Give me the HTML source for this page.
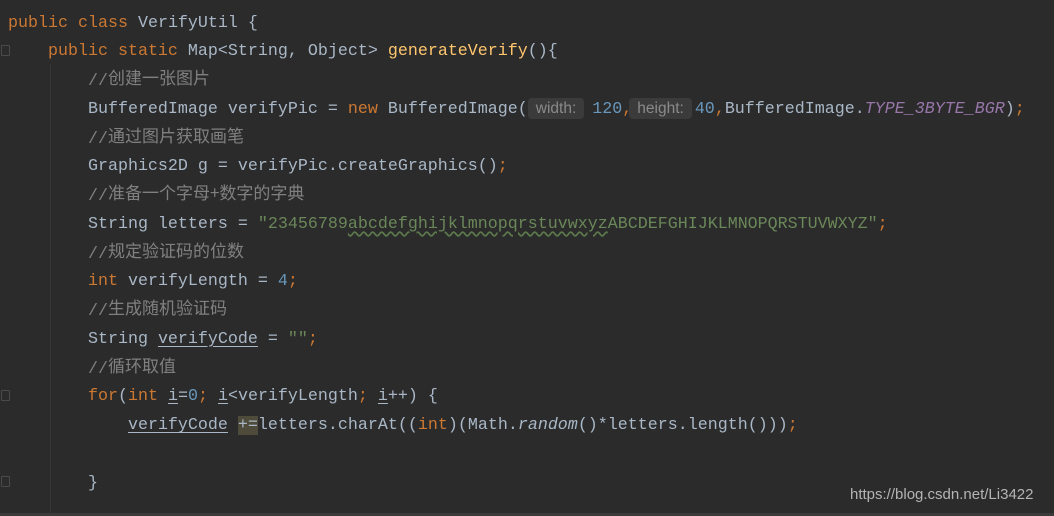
<!DOCTYPE html>
<html><head><meta charset="utf-8"><style>
body{margin:0;width:1054px;height:516px;background:#2b2b2b;overflow:hidden;position:relative;font-family:"Liberation Mono","Noto Sans CJK SC",monospace;font-size:16.67px;color:#a9b7c6}
.l{position:absolute;left:8px;height:28.75px;line-height:28.75px;white-space:pre;margin-top:2px}
.k{color:#cc7832}.c{color:#808080}.s{color:#6a8759}.n{color:#6897bb}.m{color:#ffc66d}.f{color:#9876aa;font-style:italic}
.cj{font-family:"Noto Sans CJK SC",sans-serif;font-size:17px;position:relative;top:-4px}
.cc{position:relative;top:-3px}
.h{display:inline-block;background:#3b3b3b;color:#8a8a8a;font-family:"Liberation Sans",sans-serif;font-size:15.5px;line-height:21px;padding:0 8px;border-radius:4px;margin-right:8px}
.u{text-decoration:underline;text-underline-offset:3px}
.w{text-decoration:underline wavy #5d7a4d;text-underline-offset:3px}
.g{position:absolute;left:50px;top:64px;width:1px;height:452px;background:#373737}
.fold{position:absolute;left:1px;width:7px;height:9px;border:1px solid #4a4a4a;border-radius:1px}
</style></head><body>
<div class="g"></div>
<div class="fold" style="top:45px"></div>
<div class="fold" style="top:390px"></div>
<div class="fold" style="top:476px"></div>
<div class="l" style="top:7.6px"><span class="k">public class </span>VerifyUtil {</div>
<div class="l" style="top:36.4px">    <span class="k">public static </span>Map&lt;String, Object&gt; <span class="m">generateVerify</span>(){</div>
<div class="l" style="top:65.1px">        <span class="c"><span class="cc">//</span><span class="cj">创建一张图片</span></span></div>
<div class="l" style="top:93.9px">        BufferedImage verifyPic = <span class="k">new </span>BufferedImage(<span class="h">width:</span><span class="n">120</span><span class="k">,</span><span class="h" style="margin-left:-3px;margin-right:3px">height:</span><span class="n">40</span><span class="k">,</span>BufferedImage.<span class="f">TYPE_3BYTE_BGR</span>)<span class="k">;</span></div>
<div class="l" style="top:122.6px">        <span class="c"><span class="cc">//</span><span class="cj">通过图片获取画笔</span></span></div>
<div class="l" style="top:151.4px">        Graphics2D g = verifyPic.createGraphics()<span class="k">;</span></div>
<div class="l" style="top:180.1px">        <span class="c"><span class="cc">//</span><span class="cj">准备一个字母+数字的字典</span></span></div>
<div class="l" style="top:208.9px">        String letters = <span class="s">"23456789<span class="w">abcdefghijklmnopqrstuvwxyz</span>ABCDEFGHIJKLMNOPQRSTUVWXYZ"</span><span class="k">;</span></div>
<div class="l" style="top:237.6px">        <span class="c"><span class="cc">//</span><span class="cj">规定验证码的位数</span></span></div>
<div class="l" style="top:266.4px">        <span class="k">int </span>verifyLength = <span class="n">4</span><span class="k">;</span></div>
<div class="l" style="top:295.1px">        <span class="c"><span class="cc">//</span><span class="cj">生成随机验证码</span></span></div>
<div class="l" style="top:323.9px">        String <span class="u">verifyCode</span> = <span class="s">""</span><span class="k">;</span></div>
<div class="l" style="top:352.6px">        <span class="c"><span class="cc">//</span><span class="cj">循环取值</span></span></div>
<div class="l" style="top:381.4px">        <span class="k">for</span>(<span class="k">int </span><span class="u">i</span>=<span class="n">0</span><span class="k">; </span><span class="u">i</span>&lt;verifyLength<span class="k">; </span><span class="u">i</span>++) {</div>
<div class="l" style="top:410.1px">            <span class="u">verifyCode</span> <span style="background:#4f4b3a">+=</span>letters.charAt((<span class="k">int</span>)(Math.<span style="font-style:italic">random</span>()*letters.length()))<span class="k">;</span></div>
<div class="l" style="top:467.6px">        }</div>
<div style="position:absolute;left:850px;top:486px;font-family:'Liberation Sans',sans-serif;font-size:15px;color:#b4b4b4">https://blog.csdn.net/Li3422</div>
<div style="position:absolute;left:0;top:513px;width:1054px;height:3px;background:#3a3a3a"></div>
</body></html>
